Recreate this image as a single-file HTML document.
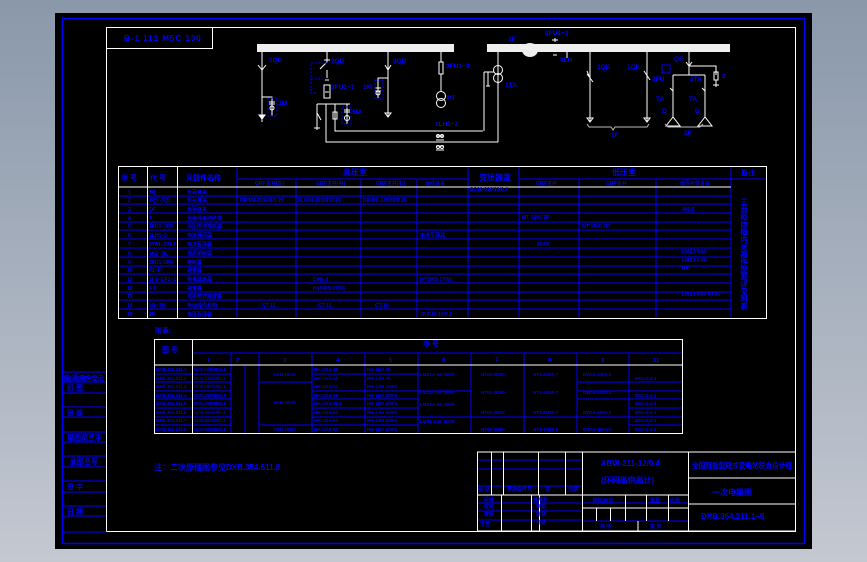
<!DOCTYPE html>
<html><head><meta charset="utf-8"><style>
html,body{margin:0;padding:0;width:867px;height:562px;overflow:hidden;background:linear-gradient(#8a98aa,#c4c8d1);}
svg{display:block}
text{font-family:"Liberation Sans","Noto Sans CJK SC",sans-serif;fill:#0000ff;font-weight:bold}
</style></head><body>
<svg width="867" height="562" viewBox="0 0 867 562" xmlns="http://www.w3.org/2000/svg">
<rect x="55" y="13" width="757" height="536" fill="#000"/>
<rect x="62.5" y="18.5" width="742" height="525" fill="none" stroke="#0000ff" stroke-width="1.5"/>
<path d="M106.5 531.5V27.5H795.5V531.5H106.5" fill="none" stroke="#fff" stroke-width="1"/>
<rect x="106.5" y="27.5" width="106" height="21" fill="none" stroke="#fff"/>
<text x="124" y="41" font-size="8" letter-spacing="1">B-1 112 M5C 130</text>

<g stroke="#0000ff" stroke-width="1">
<path d="M62 372H106M62 382H106M62 393H106M62 407H106M62 417H106M62 432H106M62 442H106M62 456H106M62 467H106M62 481H106M62 492H106M62 506H106M62 516H106M62 532H106"/>
</g>
<g font-size="7">
<text x="63.5" y="380" font-size="6.5" textLength="40" lengthAdjust="spacingAndGlyphs">借(通)用件登记</text>
<text x="67" y="390">旧 图</text>
<text x="67" y="415">旧 底</text>
<text x="67" y="440">描图员签字</text>
<text x="70" y="464">底图总号</text>
<text x="67" y="489">签 字</text>
<text x="67" y="514">日 期</text>
</g>

<g stroke="#fff" stroke-width="1" fill="none">
<rect x="257" y="44" width="197" height="8" fill="#eee" stroke="none"/>
<rect x="487" y="44" width="243" height="8" fill="#eee" stroke="none"/>
<ellipse cx="530" cy="50" rx="8" ry="7" fill="#eee" stroke="none"/>
<path d="M262 52V122M258 65L262 70L266 65M262 97H272V116M269 102H275M269 104H275"/>
<circle cx="272" cy="108" r="2"/>
<path d="M259 115H265L262 119Z" fill="#fff"/>
<path d="M327 52V62M324 60L330 60M327 62L320 69M327 70V78M325 80H329M325 92H329M324 85H330V98H324Z M317 104V130M317 104H350M335 104V131H483M326 104V142H498"/>
<path d="M317 113L321 120M317 120V128M314 128H320"/>
<rect x="333" y="112" width="4" height="7"/>
<circle cx="347" cy="118" r="2.5"/>
<path d="M347 104V124M344 110H350M344 112H350"/>
<path d="M388 52V117M385 65L388 70L391 65M388 78H378V98M375 88H381M375 91H381M385 113H391L388 117Z"/>
<circle cx="378" cy="93" r="2"/>
<path d="M441 52V62M441 74V92"/>
<rect x="439" y="62" width="4" height="12"/>
<circle cx="441" cy="96" r="4.5"/><circle cx="441" cy="103" r="4.5"/>
<path d="M498 52V142M484 72V131M484 72H494M488 72V86M486 86H490"/>
<circle cx="498" cy="70" r="4.5"/><circle cx="498" cy="78" r="4.5"/>
<path d="M436 136H444M436 140H444M436 146H444M436 150H444"/>
<circle cx="438" cy="136" r="1.5"/><circle cx="442" cy="136" r="1.5"/><circle cx="438" cy="147" r="1.5"/><circle cx="442" cy="147" r="1.5"/>
<path d="M555 38V42M552 40H558M553 55H557M567 52V58"/>
<path d="M590 52V122M590 60V68M587 71L590 78M587 74L593 82M647 52V122M644 71L650 80M587 118H593L590 122ZM644 118H650L647 122Z"/>
<path d="M587 124L589 127H611L613 130L615 127H647L649 124" stroke="#bbb"/>
<path d="M689 52V75M686 62L689 66L692 62M689 66H716V75M714 72H718V80H714Z M716 80V87M713 85H719M673 75H705M673 75V118M705 75V118M670 88L673 91M702 88L705 91"/>
<path d="M673 117L666 126H680Z M705 117L698 126H712Z"/>
<path d="M665 124L668 127H700L703 124" stroke="#bbb"/>
</g>
<g stroke="#0000ff" stroke-width="1" fill="none" stroke-dasharray="2,1.5">
<rect x="268" y="98" width="9" height="18"/>
<path d="M327 63H311V93H317M311 79H323M311 63"/>
<rect x="375" y="80" width="8" height="19"/>
<rect x="342" y="107" width="9" height="17"/>
</g>
<rect x="662" y="65" width="8" height="8" fill="none" stroke="#0000ff"/>
<g font-size="6.5">
<text x="269" y="62">1QD</text><text x="278" y="105">3M</text>
<text x="331" y="63">3QD</text><text x="331" y="89">3FU1~3</text><text x="363" y="89">3M</text>
<text x="393" y="63">3QD</text><text x="446" y="68">3FU1~3</text><text x="447" y="100">PT</text>
<text x="352" y="114">3M</text><text x="435" y="126">1LH1~2</text>
<text x="505" y="87">1TA</text><text x="508" y="41">1F</text><text x="545" y="35">3FU1~3</text><text x="560" y="62">3LH</text>
<text x="597" y="69">1QK</text><text x="627" y="69">1QK</text><text x="611" y="137">1F</text>
<text x="674" y="61">QF</text><text x="722" y="78">2</text><text x="652" y="81">3FU</text><text x="690" y="81">3TA</text>
<text x="656" y="101">TA</text><text x="689" y="101">TA</text><text x="662" y="113">D</text><text x="695" y="113">D</text>
<text x="684" y="135">1F</text>
</g>

<g stroke="#0000ff" stroke-width="1" fill="none">
<path d="M237 166V318M296 179V318M361 179V318M417 179V318M468 166V318M519 166V318M579 179V318M656 179V318M731 166V318"/>
<path d="M237 179H468M519 179H767"/>
<path d="M118 196H731M118 204H731M118 213H731M118 222H731M118 230H731M118 239H731M118 248H731M118 257H731M118 266H731M118 274H731M118 283H731M118 292H731M118 300H731M118 309H731"/>
</g>
<g stroke="#fff" stroke-width="1" fill="none">
<rect x="118.5" y="166.5" width="648" height="152"/>
<path d="M147.5 166V318M177.5 166V318M118 187H731"/>
</g>
<g font-size="7">
<text x="121" y="180">序 号</text><text x="150" y="180">代 号</text><text x="186" y="180">元器件名称</text>
<text x="343" y="175" font-size="8">高压室</text><text x="479" y="180" font-size="8">变压器室</text><text x="612" y="175" font-size="8">低压室</text><text x="741" y="175">备注</text>
</g>
<g font-size="5">
<text x="255" y="185">GRP主开(左)</text><text x="316" y="185">GRP主开(中)</text><text x="376" y="185">GRP主开(右)</text><text x="425" y="185">出线开关</text>
<text x="536" y="185">GRP主开</text><text x="606" y="185">GRP主开</text><text x="680" y="185">低压补偿主开</text>
<text x="128" y="194">1</text><text x="128" y="202">2</text><text x="128" y="211">3</text><text x="128" y="220">4</text><text x="128" y="228">5</text><text x="128" y="237">6</text><text x="128" y="246">7</text><text x="128" y="255">8</text><text x="128" y="264">9</text><text x="127" y="272">10</text><text x="127" y="281">11</text><text x="127" y="290">12</text><text x="127" y="298">13</text><text x="127" y="307">14</text><text x="127" y="316">15</text>
<text x="149" y="194">1Q</text><text x="149" y="202">1Q1~3Q1</text><text x="149" y="211">QF</text><text x="149" y="220">T</text><text x="149" y="228">1FU1~3FU</text><text x="149" y="237">1LH1~2</text><text x="149" y="246">3TA1~3TA1</text><text x="149" y="255">1K1~3K</text><text x="149" y="264">2FU1~2FU</text><text x="149" y="272">F1~F</text><text x="149" y="281">1F1~1.F1~1</text><text x="149" y="290">F F</text><text x="149" y="307">M1~3M</text><text x="149" y="316">1F</text>
<text x="187" y="194">负荷开关</text><text x="187" y="202">负荷开关</text><text x="187" y="211">负荷开关</text><text x="187" y="220">全绝缘电缆终端</text><text x="187" y="228">高压限流熔断器</text><text x="187" y="237">电流互感器</text><text x="187" y="246">电流互感器</text><text x="187" y="255">低压熔断器</text><text x="187" y="264">熔断器</text><text x="187" y="272">避雷器</text><text x="187" y="281">带电显示器</text><text x="187" y="290">避雷器</text><text x="187" y="298">可拆卸式避雷器</text><text x="187" y="307">电动操作机构</text><text x="187" y="316">电压互感器</text>
<text x="240" y="202">DR/M2-12/630/1.25</text><text x="298" y="202">FLN36-12D/630-20</text><text x="363" y="202">DR/M2-12/630/1.25</text>
<text x="470" y="191">SC10-630/10/0.4</text><text x="522" y="219">MT 1600 3P</text><text x="582" y="228">MT 1600 3P</text><text x="682" y="211">400/5</text>
<text x="420" y="237">电流互感器</text><text x="537" y="246">800/5</text><text x="682" y="253">LMZJ 0.66</text><text x="682" y="262">LMZJ-0.66</text><text x="682" y="270">BK</text>
<text x="313" y="281">DXN-3</text><text x="420" y="281">HY5WS-17/50</text><text x="313" y="290">HY5WS-17/50</text><text x="682" y="296">LMZJ 0.66 400/5</text>
<text x="262" y="307">CT-10</text><text x="318" y="307">CT-10</text><text x="375" y="307">CT-10</text><text x="420" y="316">JDZ-10 10/0.1</text>
</g>
<text font-size="7.5" x="744" y="198" writing-mode="tb" textLength="112" lengthAdjust="spacingAndGlyphs">三台柜体柜内元器件配置详见附表</text>

<text x="155" y="333" font-size="7">附表:</text>
<g stroke="#0000ff" stroke-width="1" fill="none">
<path d="M192 353H683M231 353V434M245 365V434M259 353V434M312 353V434M365 353V434M418 353V434M471 353V434M524 353V434M577 353V434M629 353V434"/>
<path d="M154 374H231M154 382H231M154 391H231M154 399H231M154 408H231M154 417H231M154 425H231M259 382H312M259 425H312M312 374H418M312 391H471M312 399H418M312 408H418M312 417H471M312 425H418M418 417H683M577 382H683M577 391H683M577 399H683M629 408H683M629 425H683M365 408V434"/>
</g>
<g stroke="#fff" stroke-width="1" fill="none">
<rect x="154.5" y="339.5" width="528" height="94"/>
<path d="M192.5 339V434M154 365H683"/>
</g>
<g font-size="6">
<text x="162" y="352" font-size="7">图 号</text><text x="423" y="346" font-size="7">序  号</text>
<text x="207" y="362">1</text><text x="236" y="362">2</text><text x="283" y="362">3</text><text x="336" y="362">4</text><text x="389" y="362">5</text><text x="442" y="362">6</text><text x="495" y="362">7</text><text x="548" y="362">8</text><text x="601" y="362">9</text><text x="653" y="362">11</text>
</g>
<g font-size="4.5">
<text x="156" y="371">DXB.351.211.1</text><text x="156" y="380">DXB.351.211.2</text><text x="156" y="388">DXB.351.211.3</text><text x="156" y="397">DXB.351.211.4</text><text x="156" y="405">DXB.351.211.5</text><text x="156" y="414">DXB.351.211.6</text><text x="156" y="422">DXB.351.211.7</text><text x="156" y="431">DXB.351.211.8</text>
<text x="194" y="371">SC9-100/10/0.4</text><text x="194" y="380">SC9-125/10/0.4</text><text x="194" y="388">SC9-160/10/0.4</text><text x="194" y="397">SC9-200/10/0.4</text><text x="194" y="405">SC9-250/10/0.4</text><text x="194" y="414">SC9-315/10/0.4</text><text x="194" y="422">SC9-400/10/0.4</text><text x="194" y="431">SC9-500/10/0.4</text>
<text x="273" y="376">XGN-100/3</text><text x="273" y="404">XGN-200/3</text><text x="273" y="431">XGN-100/3</text>
<text x="314" y="371">HH-12/A-10</text><text x="314" y="380">HH-12/A-16</text><text x="314" y="388">HH-12/A-20</text><text x="314" y="397">HH-12/A-25</text><text x="314" y="405">HH-12/A-31.5</text><text x="314" y="414">HH-12/A-40</text><text x="314" y="422">HH-12/A-50</text><text x="314" y="431">HH-12/A-63</text>
<text x="367" y="371">HH-12/A 75</text><text x="367" y="380">HH-12/A 75</text><text x="367" y="388">HH-12/A 150/5</text><text x="367" y="397">HH-12/A 200/5</text><text x="367" y="405">HH-12/A 300/5</text><text x="367" y="414">HH-12/A 400/5</text><text x="367" y="422">HH-12/A 500/5</text><text x="367" y="431">HH-12/A 600/5</text>
<text x="420" y="376">LMZ1-0.66 400/5</text><text x="420" y="394">LMZ1-0.66 400/5</text><text x="420" y="406">LMZ1-0.66 400/5</text><text x="420" y="423">LMZ1-0.66 400/5</text>
<text x="481" y="376">NT00-3/200</text><text x="481" y="394">NT00-3/250</text><text x="481" y="414">NT00-3/315</text><text x="481" y="431">NT00-3/400</text>
<text x="533" y="376">NT1-3/250-7</text><text x="533" y="394">NT1-3/250-7</text><text x="533" y="414">NT1-3/315-7</text><text x="533" y="431">NT1-3/400-8</text>
<text x="583" y="376">DW15-1000-2</text><text x="583" y="394">DW15-1000-2</text><text x="583" y="414">DW15-1600-2</text><text x="583" y="431">DW15-1600-2</text>
<text x="635" y="380">BMJ-0.4-3</text><text x="635" y="397">BMJ-0.4-3</text><text x="635" y="405">BMJ-0.4-3</text><text x="635" y="414">BMJ-0.4-3</text><text x="635" y="422">BMJ-0.4-3</text><text x="635" y="431">BMJ-0.4-3</text>
</g>
<text x="154" y="470" font-size="8" font-weight="normal">注：二次原理图参见DXB.354.611.8</text>

<g stroke="#0000ff" stroke-width="1" fill="none">
<path d="M477 460H582M477 469H582M477 486H582M477 503H688M477 511H582M477 520H582M583 521H688"/>
</g>
<g stroke="#fff" stroke-width="1" fill="none">
<path d="M477.5 452V531M477 452H795M477 495H688M491.5 452V495M503.5 452V495M538.5 452V495M565.5 452V495M582.5 452V531M688.5 452V531M688 478H795M688 504H795M477 531H795M501.5 495V531M531.5 495V531M539.5 495V531M583 508H688M625.5 495V521M646.5 495V521M668.5 495V521M596.5 508V521M610.5 508V521M638 521V531"/>
</g>
<g font-size="8">
<text x="601" y="466">XBW-211-12/0.4</text><text x="601" y="483">(环网高供高计)</text>
<text x="692" y="468" font-size="7.5" textLength="100" lengthAdjust="spacingAndGlyphs">全国智能型箱式变电站联合设计组</text>
<text x="712" y="495">一次电路图</text>
<text x="701" y="519">DXB.354.211.1~8</text>
</g>
<g font-size="5">
<text x="478" y="491">标 记</text><text x="507" y="491">更改文件号</text><text x="545" y="491">签</text><text x="568" y="491">日期</text>
<text x="484" y="501">设计</text><text x="484" y="508">校对</text><text x="484" y="516">审核</text><text x="480" y="526">工艺</text>
<text x="533" y="501">标准化</text><text x="536" y="508">审定</text><text x="536" y="516">批准</text><text x="536" y="524">日期</text>
<text x="593" y="502">阶段标记</text><text x="650" y="502">重量</text><text x="670" y="502">比例</text>
<text x="600" y="528">共 张</text><text x="650" y="528">第 张</text>
</g>
</svg>
</body></html>
